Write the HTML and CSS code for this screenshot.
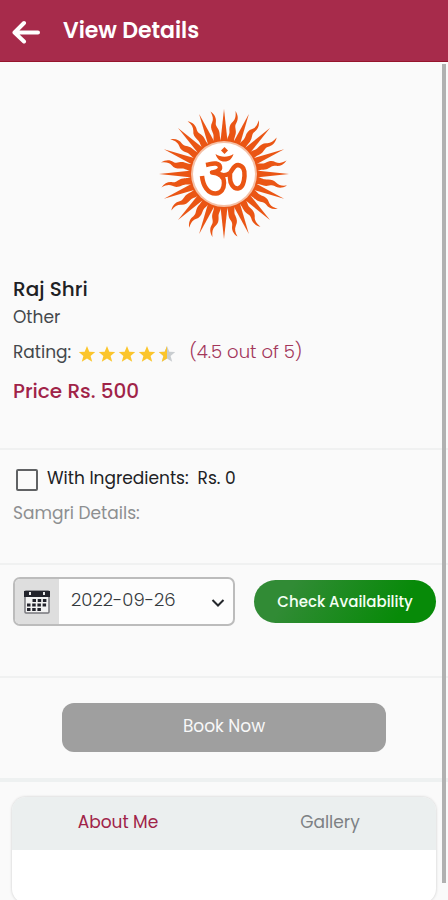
FILE: index.html
```html
<!DOCTYPE html>
<html lang="en">
<head>
    <meta charset="UTF-8">
    <meta name="viewport" content="width=device-width, initial-scale=1.0">
    <title>View Details</title>
    <link rel="stylesheet" href="styles.css">
</head>
<body>
    <header class="top-bar">
        <button class="back-btn" type="button" aria-label="Back">
            <svg width="28" height="24" viewBox="0 0 28 24">
                <path d="M26 12.500H3M12 3L2.500 12.500L12 21.500" fill="none" stroke="#fff" stroke-width="4" stroke-linecap="round" stroke-linejoin="round"/>
            </svg>
        </button>
        <h1>View Details</h1>
    </header>

    <main class="page">
        <section class="profile">
            <svg class="logo" width="132" height="132" viewBox="-66 -66 132 132" fill="#ea5514">
                <defs>
                    <g id="rays">
                        <path d="M-3.600 -32L0 -65L3.600 -32Z"/>
                        <path transform="rotate(11.250)" d="M-3.800 -32C-3.800 -38 -2 -39 -3 -43C-4 -47 -4 -50 -1.500 -53C.5 -56 .5 -59 -1 -64C2.800 -60 3.500 -56 2 -52C.5 -48 4 -46 3.600 -41C3.200 -37 3 -36 3.800 -32Z"/>
                    </g>
                    <g id="quarter">
                        <use href="#rays"/>
                        <use href="#rays" transform="rotate(22.500)"/>
                        <use href="#rays" transform="rotate(45)"/>
                        <use href="#rays" transform="rotate(67.500)"/>
                    </g>
                </defs>
                <use href="#quarter"/>
                <use href="#quarter" transform="rotate(90)"/>
                <use href="#quarter" transform="rotate(180)"/>
                <use href="#quarter" transform="rotate(270)"/>
                <circle r="33" fill="#f5c0a6"/>
                <circle r="31" fill="#fff"/>
                <g fill="none" stroke="#ea5514" stroke-width="4.500" stroke-linejoin="round">
                    <path d="M-18 -9C-13 -10 -12 -11 -8 -10.500C-3 -9.500 -3 -5 -6 -3.500C-8 -2 -10 -2 -12 -1.500C-4 -1 0 3 0 9C0 15 -3 19 -8 19.500C-16 20 -21 12 -22 2"/>
                    <path d="M-7 -1C-2 2 2 2 6 -1C9 -5 10 -9 14 -9C19 -8.500 21 -4 20.500 2C20 9 18 14 14 14.500C9 15 6 9 6 4V-1"/>
                </g>
                <path d="M-8.500 -20C-3 -16.500 4 -16.500 9.500 -20C8 -15 5 -12.500 .5 -12.500C-4 -12.500 -7 -15 -8.500 -20Z"/>
                <path d="M.5 -27L4 -23.500L.5 -20L-3 -23.500Z"/>
            </svg>
            <h2>Raj Shri</h2>
            <p class="category">Other</p>
            <div class="rating">
                <span>Rating:</span>
                <svg class="stars" width="98" height="18" viewBox="0 0 98 18" fill="#fbc52c" role="img" aria-label="4.5 stars">
                    <defs>
                        <path id="star" d="M9 1L11.300 6.700L17.200 7.100L12.600 10.900L14.200 16.800L9 13.500L3.800 16.800L5.400 10.900L.8 7.100L6.700 6.700Z"/>
                    </defs>
                    <use href="#star"/>
                    <use href="#star" x="20"/>
                    <use href="#star" x="40"/>
                    <use href="#star" x="60"/>
                    <use href="#star" x="80" fill="#c9cdd0"/>
                    <path d="M89 1V13.500L83.800 16.800L85.400 10.900L80.800 7.100L86.700 6.700Z"/>
                </svg>
                <span class="score">(4.5 out of 5)</span>
            </div>
            <p class="price">Price Rs. 500</p>
        </section>

        <section class="ingredients">
            <label class="check">
                <input type="checkbox">
                <span>With Ingredients:</span>
                <span>Rs. 0</span>
            </label>
            <p class="samgri">Samgri Details:</p>
        </section>

        <section class="booking">
            <div class="date-box">
                <label class="date-icon" for="date" aria-label="Date">
                    <svg width="26" height="24" viewBox="0 0 26 24">
                        <rect x="1" y="1" width="24" height="22" rx="1" fill="#f2f2f2" stroke="#77777c" stroke-width="1.500"/>
                        <path d="M0 1H26V7H0Z" fill="#22232b"/>
                        <path d="M6 2V5M20 2V5" stroke="#e8e8e8" stroke-width="2"/>
                        <path d="M8.500 10.500H23M3 15H23M3 19.500H18" stroke="#22232b" stroke-width="3" stroke-dasharray="3.500 1.700"/>
                    </svg>
                </label>
                <select id="date">
                    <option>2022-09-26</option>
                </select>
                <svg class="chevron" width="14" height="10" viewBox="0 0 14 10">
                    <path d="M1.500 2L7 7.500L12.500 2" fill="none" stroke="#25282c" stroke-width="2"/>
                </svg>
            </div>
            <button class="check-btn" type="button">Check Availability</button>
        </section>

        <section class="book">
            <button class="book-btn" type="button">Book Now</button>
        </section>

        <section class="about">
            <div class="card">
                <div class="tabs" role="tablist">
                    <button class="tab active" type="button" role="tab" aria-selected="true">About Me</button>
                    <button class="tab" type="button" role="tab" aria-selected="false">Gallery</button>
                </div>
            </div>
        </section>
        <div class="scroll-thumb"></div>
    </main>
</body>
</html>
```

FILE: styles.css
```css
* {
    box-sizing: border-box;
}
body {
    margin: 0;
    height: 100vh;
    overflow: hidden;
    display: flex;
    flex-direction: column;
    background: #fafafa;
    color: #44484c;
    font-family: Poppins, Inter, sans-serif;
    font-size: 17px;
    line-height: 24px;
    font-weight: 400;
}
h1, h2, p {
    margin: 0;
}
button {
    border: none;
    padding: 0;
    font: inherit;
    cursor: pointer;
}
.top-bar {
    flex: none;
    display: flex;
    align-items: center;
    gap: 23px;
    height: 62px;
    padding: 2px 12px 0;
    background: #a72b4b;
    border-bottom: 1px solid #96142c;
}
.back-btn {
    display: flex;
    background: none;
}
.top-bar h1 {
    color: #fff;
    font-size: 22px;
    line-height: 28px;
    font-weight: 600;
    padding-bottom: 2px;
}
.page {
    position: relative;
    flex: 1;
    overflow: hidden;
}
section {
    border-bottom: 2px solid #f0f1f1;
    padding: 0 13px;
}
.profile {
    display: flex;
    flex-direction: column;
    padding-top: 46px;
    padding-bottom: 45px;
}
.logo {
    align-self: center;
    margin-bottom: 37px;
}
.profile h2 {
    color: #202124;
    font-size: 20px;
    line-height: 24px;
    font-weight: 500;
}
.category {
    margin: 4px 0 11px;
}
.rating {
    display: flex;
    align-items: center;
}
.stars {
    margin: 4px 13px 0 7px;
}
.score {
    color: #a3365a;
    font-size: 18px;
    font-weight: 300;
}
.price {
    margin-top: 15px;
    color: #a02348;
    font-size: 20px;
    font-weight: 500;
}
.ingredients {
    padding-top: 15px;
    padding-bottom: 38px;
}
.check {
    display: flex;
    align-items: center;
    gap: 9px;
    color: #202124;
}
.check input {
    appearance: none;
    width: 22px;
    height: 22px;
    margin: 4px 0 0 3px;
    border: 2px solid #606264;
    border-radius: 2px;
}
.samgri {
    margin-top: 10px;
    color: #8d8f91;
}
.booking {
    display: flex;
    align-items: center;
    gap: 19px;
    padding-top: 12px;
    padding-bottom: 50px;
}
.date-box {
    position: relative;
    display: flex;
    flex: 6;
    height: 49px;
    border: 2px solid #bcbcbc;
    border-radius: 7px;
    background: #fdfdfd;
    overflow: hidden;
}
.date-icon {
    display: flex;
    align-items: center;
    justify-content: center;
    width: 44px;
    background: #dedede;
}
.date-box select {
    flex: 1;
    appearance: none;
    border: none;
    background: none;
    padding: 0 12px 4px;
    color: #34383c;
    font: inherit;
    font-size: 18px;
    font-weight: 300;
}
.chevron {
    position: absolute;
    right: 8px;
    top: 19px;
    pointer-events: none;
}
.check-btn {
    flex: 5;
    height: 43px;
    margin-right: -1px;
    border-radius: 22px;
    background: linear-gradient(120deg, #318b35 20%, #078a08 80%);
    color: #f4fff4;
    font-size: 15px;
    font-weight: 500;
    white-space: nowrap;
}
.book {
    display: flex;
    justify-content: center;
    padding-top: 25px;
    padding-bottom: 26px;
    border-bottom: 4px solid #eef1f1;
}
.book-btn {
    width: 77%;
    height: 49px;
    padding-bottom: 4px;
    border-radius: 12px;
    background: #9f9f9f;
    color: #f8f8f8;
}
.about {
    padding: 15px 12px 0;
    border: none;
}
.card {
    height: 106px;
    border-radius: 14px;
    background: #fff;
    box-shadow: 0 0 3px rgba(0, 0, 0, 0.2);
    overflow: hidden;
}
.tabs {
    display: flex;
    background: #ebefef;
}
.tab {
    flex: 1;
    height: 53px;
    padding-bottom: 4px;
    background: none;
    color: #7d8184;
}
.tab.active {
    color: #a02348;
}
.scroll-thumb {
    position: absolute;
    top: 2px;
    right: 2px;
    bottom: 17px;
    width: 4px;
    background: #b1b1b1;
}
```
